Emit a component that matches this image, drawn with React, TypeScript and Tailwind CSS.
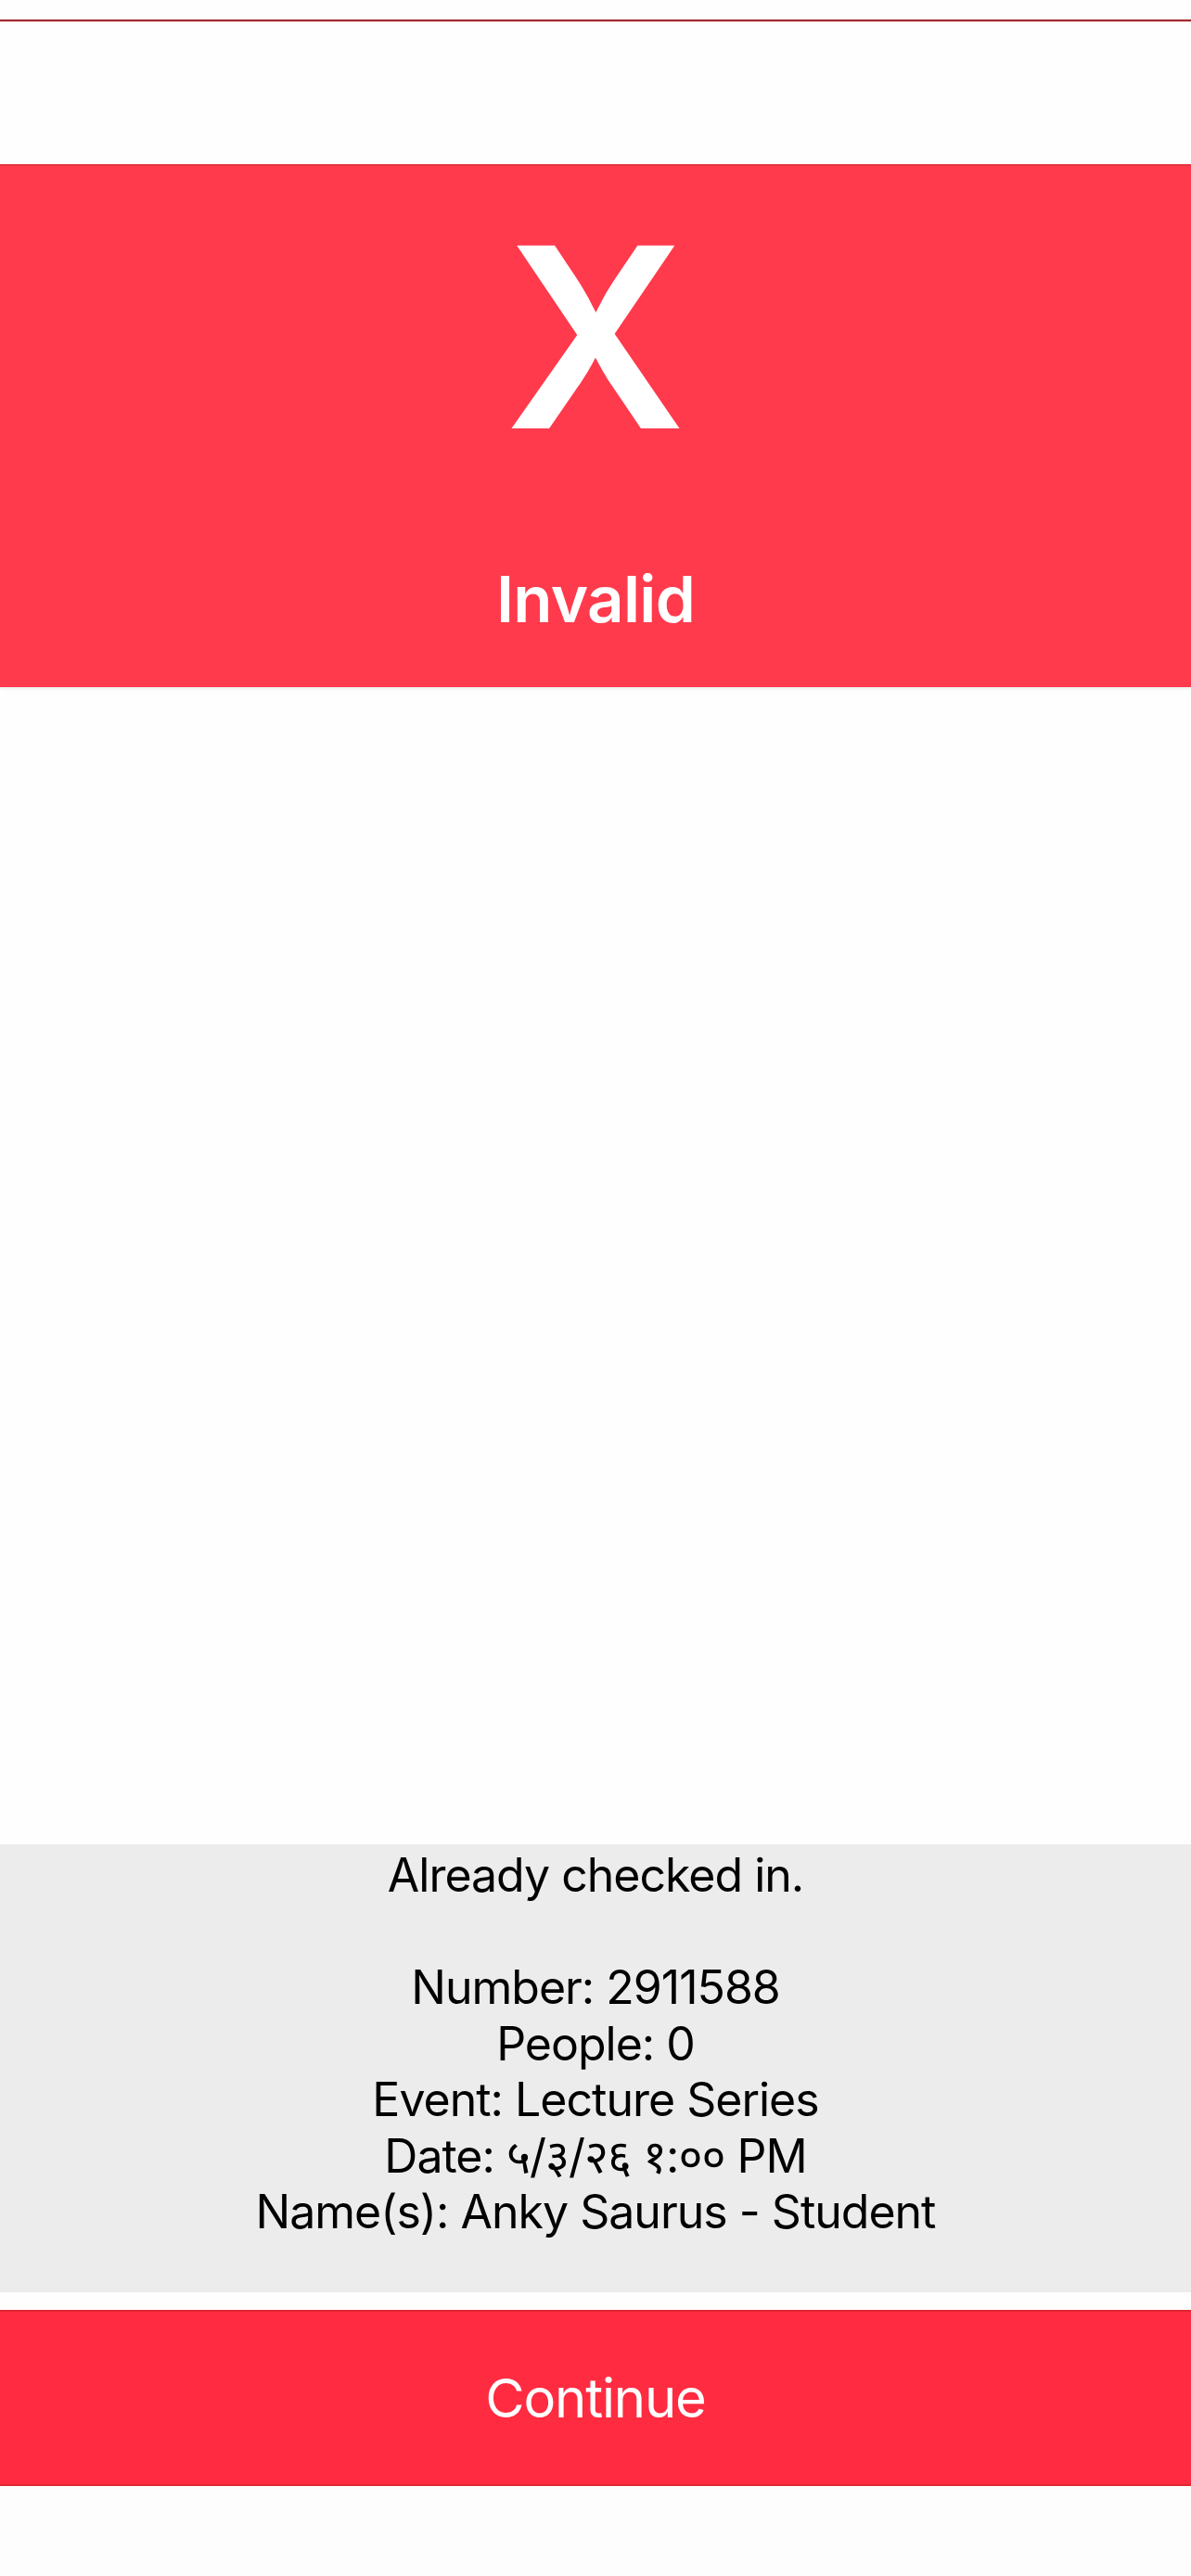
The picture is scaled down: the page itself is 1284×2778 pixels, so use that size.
import React from "react";

export default function App() {
  const font = { fontFamily: "Inter, 'Noto Sans', 'Noto Sans Devanagari', 'DejaVu Sans', sans-serif" };
  return (
    <div className="w-[1284px] h-[2778px] bg-[#FEFEFE] flex flex-col overflow-hidden" style={font}>
      <div className="h-[21px] shrink-0" />
      <div className="h-[2px] shrink-0 bg-[#9E2A30]" />
      <div className="h-[1px] shrink-0 bg-[#F6C9CB]" />
      <div className="h-[153px] shrink-0" />
      <div className="h-[564px] shrink-0 bg-[#FF3A4C] border-t-[2px] border-[#E8343F] flex flex-col items-center pt-[49px] text-white shadow-[0_2px_3px_rgba(0,0,0,0.08)]">
        <div className="text-[271px] leading-none font-semibold">X</div>
        <div className="mt-[113px] text-[69px] leading-none font-semibold tracking-[-0.01em]">Invalid</div>
      </div>
      <div className="h-[1248px] shrink-0" />
      <div className="h-[483px] shrink-0 bg-[#ECECEC] flex flex-col items-center pt-[3px] text-black text-[50px] leading-[60.5px] tracking-[-0.02em]">
        <div>Already checked in.</div>
        <div>&nbsp;</div>
        <div>Number: 2911588</div>
        <div>People: 0</div>
        <div>Event: Lecture Series</div>
        <div>Date: ५/३/२६ १:०० PM</div>
        <div>Name(s): Anky Saurus - Student</div>
      </div>
      <div className="h-[19px] shrink-0" />
      <button className="h-[190px] shrink-0 w-full bg-[#FF2B41] border-y-[2px] border-[#E02634] flex items-center justify-center text-white text-[58px] leading-none tracking-[-0.02em]">
        Continue
      </button>
      <div className="flex-1 bg-[#FDFDFD]" />
    </div>
  );
}
